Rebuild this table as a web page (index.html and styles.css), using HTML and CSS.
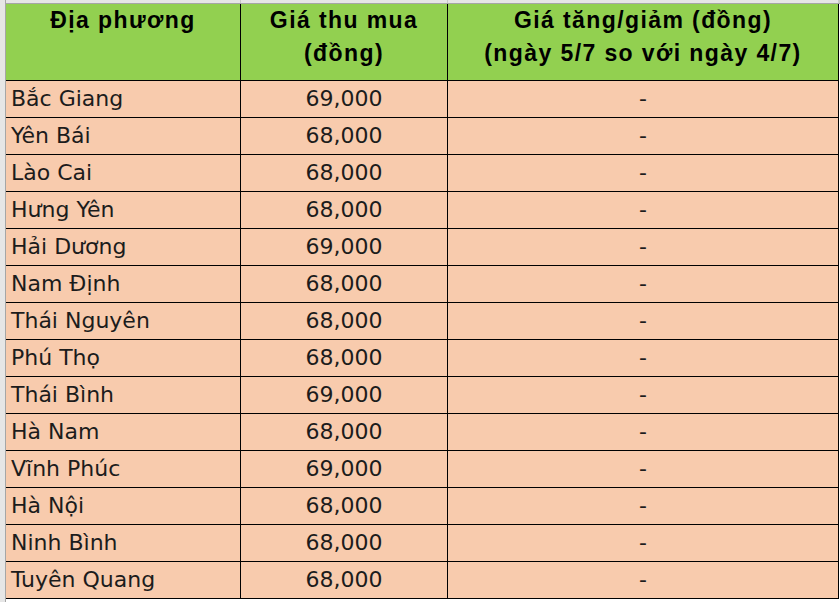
FILE: index.html
```html
<!DOCTYPE html>
<html lang="vi">
<head>
<meta charset="utf-8">
<title>Giá thu mua</title>
<link rel="stylesheet" href="styles.css">
</head>
<body>
<div class="sheet">
  <div class="gutter"></div>
  <div class="main">
    <div class="strip">
      <div class="strip-cell"></div>
      <div class="strip-cell"></div>
      <div class="strip-cell"></div>
    </div>
    <div class="table">
      <div class="th">Địa phương</div>
      <div class="th">Giá thu mua<br>(đồng)</div>
      <div class="th">Giá tăng/giảm (đồng)<br>(ngày 5/7 so với ngày 4/7)</div>

      <div class="td name">Bắc Giang</div><div class="td num">69,000</div><div class="td num">-</div>
      <div class="td name">Yên Bái</div><div class="td num">68,000</div><div class="td num">-</div>
      <div class="td name">Lào Cai</div><div class="td num">68,000</div><div class="td num">-</div>
      <div class="td name">Hưng Yên</div><div class="td num">68,000</div><div class="td num">-</div>
      <div class="td name">Hải Dương</div><div class="td num">69,000</div><div class="td num">-</div>
      <div class="td name">Nam Định</div><div class="td num">68,000</div><div class="td num">-</div>
      <div class="td name">Thái Nguyên</div><div class="td num">68,000</div><div class="td num">-</div>
      <div class="td name">Phú Thọ</div><div class="td num">68,000</div><div class="td num">-</div>
      <div class="td name">Thái Bình</div><div class="td num">69,000</div><div class="td num">-</div>
      <div class="td name">Hà Nam</div><div class="td num">68,000</div><div class="td num">-</div>
      <div class="td name">Vĩnh Phúc</div><div class="td num">69,000</div><div class="td num">-</div>
      <div class="td name">Hà Nội</div><div class="td num">68,000</div><div class="td num">-</div>
      <div class="td name">Ninh Bình</div><div class="td num">68,000</div><div class="td num">-</div>
      <div class="td name">Tuyên Quang</div><div class="td num">68,000</div><div class="td num">-</div>
    </div>
  </div>
</div>
</body>
</html>
```

FILE: styles.css
```css
html, body {
  margin: 0;
  padding: 0;
  background: #ffffff;
}

.sheet {
  display: flex;
  width: 840px;
  height: 602px;
  overflow: hidden;
}

.gutter {
  width: 5px;
  flex: none;
  background: #e6e6e6;
  border-right: 1px solid #a6a6a6;
}

.main {
  display: flex;
  flex-direction: column;
  flex: none;
}

.strip {
  display: grid;
  grid-template-columns: 234px 206px 390px 2px;
  column-gap: 1px;
  height: 3px;
  background: #c8c8c8;
  border-bottom: 1px solid #a6a6a6;
}

.strip-cell {
  background: #e6e6e6;
}

.table {
  display: grid;
  grid-template-columns: 234px 206px 390px;
  grid-template-rows: 76px repeat(14, 36px);
  gap: 1px;
  background: #000000;
  border-right: 1px solid #000000;
  border-bottom: 1px solid #000000;
  width: max-content;
}

.th {
  background: #92d050;
  color: #000000;
  font-family: "Liberation Sans", Arial, sans-serif;
  font-weight: bold;
  font-size: 23px;
  line-height: 33px;
  letter-spacing: 1.4px;
  text-align: center;
}

.td {
  background: #f8cbad;
  color: #1c1c1c;
  font-family: "DejaVu Sans", Tahoma, sans-serif;
  font-size: 22px;
  line-height: 36px;
  white-space: nowrap;
}

.name {
  padding-left: 5px;
}

.num {
  text-align: center;
}
```
